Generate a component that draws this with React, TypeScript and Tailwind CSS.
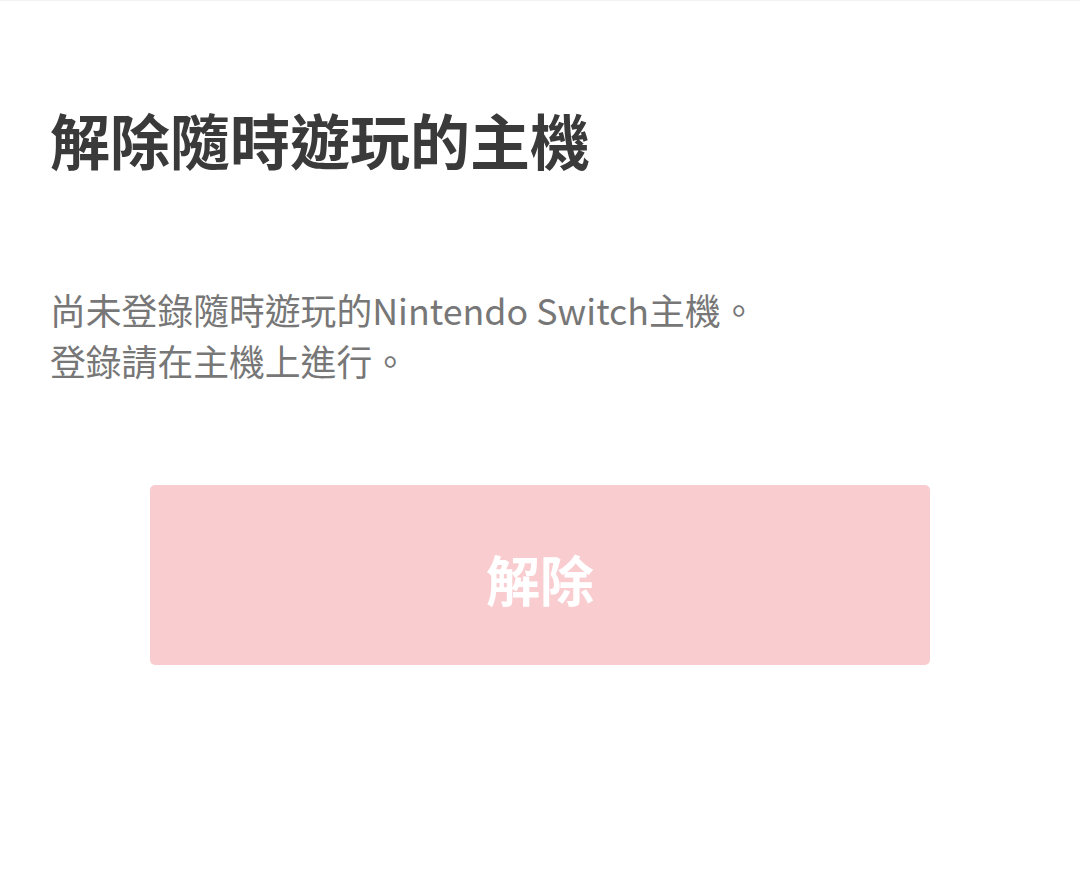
export default function App() {
  return (
    <div
      className="min-h-[874px] w-full bg-white border-t border-[#f2f2f2]"
      style={{ fontFamily: '"Noto Sans CJK TC", "Noto Sans", sans-serif' }}
    >
      <div className="px-[50px] pt-[96px]">
        <h1 className="text-[60px] leading-[84px] font-bold text-[#3a3a3a]">
          解除隨時遊玩的主機
        </h1>
        <p className="mt-[103px] text-[35.8px] leading-[51px] text-[#777777]">
          尚未登錄隨時遊玩的Nintendo Switch主機。
          <br />
          登錄請在主機上進行。
        </p>
      </div>
      <div className="flex justify-center mt-[99px]">
        <button
          className="w-[780px] h-[180px] rounded-[5px] bg-[#f9cdd0] text-white text-[54px] font-bold pt-[6px]"
          disabled
        >
          解除
        </button>
      </div>
    </div>
  );
}
